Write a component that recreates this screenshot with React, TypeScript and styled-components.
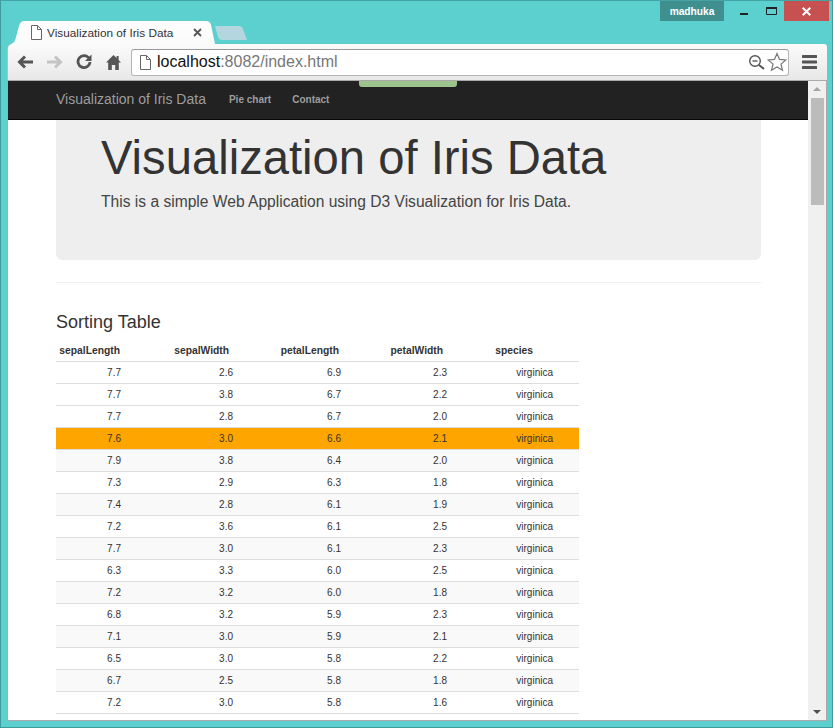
import React from "react";
import styled, { createGlobalStyle } from "styled-components";

const Global = createGlobalStyle`
  html, body { margin: 0; padding: 0; width: 833px; height: 728px; overflow: hidden; }
  * { box-sizing: border-box; }
  body { font-family: "Liberation Sans", Arial, sans-serif; color: #333; }
`;

const Frame = styled.div`
  width: 833px; height: 728px; background: #5ccfcf; border: 1px solid #3f9a9c; border-top-color: #45a3a5;
  padding: 0 5px 6px 6px; display: flex; flex-direction: column;
`;
const Strip = styled.div`
  height: 43px; flex: none; display: flex; justify-content: space-between; align-items: flex-start;
`;
const Tabs = styled.div`
  align-self: flex-end; display: flex; align-items: flex-end; height: 23px;
`;
const ActiveTab = styled.div`
  width: 208px; height: 23px; background: linear-gradient(#fff, #fafafa); display: flex; align-items: center;
  padding: 0 13px 0 23px; gap: 5px; font-size: 11.8px; color: #333;
  clip-path: path("M4 23 C7 22 8 20 9 16 L12 5 C13 2 14 0 17 0 L199 0 C202 0 203 1 204 4 L208 23 Z");
`;
const TabFile = styled.span`display: flex;`;
const TabTitle = styled.span`flex: 1; white-space: nowrap;`;
const NewTab = styled.div`
  width: 32px; height: 14px; margin: 0 0 4px 0; background: #b4d7df;
  clip-path: path("M0 0 L24 0 C26 0 27 1 28 3 L32 14 L7 14 C5 14 4 13 3 11 Z");
`;
const Controls = styled.div`display: flex; align-items: stretch; height: 20px; margin-right: -2px;`;
const User = styled.div`
  width: 64px; background: #3f8f8f; color: #fff; font-size: 10.2px; font-weight: bold; display: flex; align-items: center; justify-content: center;
  margin-right: 16px;
`;
const WinBtn = styled.div<{ $w: number; $red?: boolean; $pl?: number }>`
  width: ${p => p.$w}px; padding-left: ${p => p.$pl ?? 0}px; background: ${p => (p.$red ? "#c75050" : "transparent")}; display: flex; align-items: center;
  justify-content: ${p => (p.$pl ? "flex-start" : "center")};
`;
const Toolbar = styled.div`
  height: 37px; flex: none; background: linear-gradient(#fbfbfb, #e8e8e8); border-radius: 5px 3px 0 0; border-bottom: 1px solid #aaa;
  border-left: 1px solid #bbb; display: flex; align-items: center; padding: 0 10px 0 4px;
`;
const NavIcon = styled.div<{ $w: number }>`width: ${p => p.$w}px; display: flex; justify-content: center; align-items: center; flex: none;`;
const Omni = styled.div`
  flex: 1; height: 27px; margin: 0 13px 0 2px; background: #fff; border: 1px solid #b5b5b5; border-top-color: #999; border-radius: 3px;
  display: flex; align-items: center; padding: 0 1px 0 7px;
  font-size: 16px; color: #111;
`;
const UrlGrey = styled.span`color: #777;`;
const Url = styled.div`flex: 1; margin-left: 6px; white-space: nowrap;`;
const Star = styled.svg`margin-left: 2px;`;
const PageRow = styled.div`
  flex: 1; min-height: 0; display: flex; border-left: 1px solid #aaa; border-right: 1px solid #aaa; border-bottom: 1px solid #aaa; position: relative;
`;
const Content = styled.div`flex: 1; min-width: 0; background: #fff; overflow: hidden;`;
const Nav = styled.div`
  height: 39px; background: #222; border-bottom: 1px solid #080808; padding: 0 48px 2px; display: flex; align-items: center; gap: 23px;
`;
const Brand = styled.div`font-size: 14px; color: #9d9d9d;`;
const NavLinks = styled.div`display: flex; gap: 21px;`;
const NavLink = styled.div`font-size: 10px; color: #9d9d9d; font-weight: bold;`;
const Download = styled.div`
  position: absolute; left: 351px; top: 0; width: 98px; height: 6px; background: #9cc48c; border-radius: 0 0 3px 3px;
`;
const Main = styled.div`padding: 0 47px 0 48px;`;
const Jumbo = styled.div`
  height: 140px; background: #eee; border-radius: 0 0 6px 6px; padding: 9px 45px;
`;
const H1 = styled.h1`margin: 0; font-size: 47.2px; line-height: 58px; font-weight: 400; color: #333;`;
const Lead = styled.p`margin: 4px 0 0; font-size: 15.6px; line-height: 22px; color: #444;`;
const Rule = styled.hr`margin: 22px 0 0; border: 0; border-top: 1px solid #eee;`;
const H3 = styled.h3`margin: 29px 0 0; font-size: 18px; font-weight: 400; line-height: 20px; color: #333;`;
const Table = styled.table`
  margin-top: 9px; width: 523px; table-layout: fixed; border-collapse: collapse; font-size: 10px;
`;
const Th = styled.th<{ $pad: number }>`
  height: 20px; padding: 0 ${p => p.$pad}px 0 0; text-align: right; font-weight: bold; font-size: 10.3px; color: #333; border-bottom: 1px solid #ddd;
`;
const Td = styled.td<{ $pad: number }>`
  height: 22px; padding: 0 ${p => p.$pad}px 0 0; text-align: right; color: #333; border-bottom: 1px solid #ddd;
`;
const Row = styled.tr<{ $state: "plain" | "stripe" | "hot" }>`
  background: ${p => (p.$state === "hot" ? "#ffa500" : p.$state === "stripe" ? "#f9f9f9" : "#fff")};
`;
const Scroll = styled.div`
  width: 18px; flex: none; background: #f0f0f0; display: flex; flex-direction: column; align-items: center; padding-top: 6px;
`;
const Arrow = styled.div<{ $up?: boolean }>`
  width: 0; height: 0; border-left: 4px solid transparent; border-right: 4px solid transparent;
  ${p => (p.$up ? "border-bottom: 4px solid #a3a3a3;" : "border-top: 4px solid #505050;")}
`;
const Thumb = styled.div`width: 13px; height: 107px; background: #bcbcbc; margin: 7px 0 auto;`;
const ArrowDown = styled.div`margin-bottom: 6px;`;

const COLS = [65, 112, 108, 106, 132];
const HEAD = [["sepalLength", 1], ["sepalWidth", 4], ["petalLength", 2], ["petalWidth", 4], ["species", 46]] as const;
const PADS = [0, 0, 0, 0, 26];
const DATA = [
  ["7.7", "2.6", "6.9", "2.3"], ["7.7", "3.8", "6.7", "2.2"], ["7.7", "2.8", "6.7", "2.0"], ["7.6", "3.0", "6.6", "2.1"],
  ["7.9", "3.8", "6.4", "2.0"], ["7.3", "2.9", "6.3", "1.8"], ["7.4", "2.8", "6.1", "1.9"], ["7.2", "3.6", "6.1", "2.5"],
  ["7.7", "3.0", "6.1", "2.3"], ["6.3", "3.3", "6.0", "2.5"], ["7.2", "3.2", "6.0", "1.8"], ["6.8", "3.2", "5.9", "2.3"],
  ["7.1", "3.0", "5.9", "2.1"], ["6.5", "3.0", "5.8", "2.2"], ["6.7", "2.5", "5.8", "1.8"], ["7.2", "3.0", "5.8", "1.6"],
];

const FileIcon = () => (
  <svg width="12" height="15" viewBox="0 0 12 15">
    <path d="M1.5.5h6l4 4v10h-10z M7.5.5v4h4" fill="#fff" stroke="#666" strokeWidth="1" />
  </svg>
);

export default function App() {
  return (
    <Frame>
      <Global />
      <Strip>
        <Tabs>
          <ActiveTab>
            <TabFile><FileIcon /></TabFile>
            <TabTitle>Visualization of Iris Data</TabTitle>
            <svg width="9" height="9" viewBox="0 0 9 9"><path d="M1 1l7 7M8 1l-7 7" stroke="#555" strokeWidth="1.8" /></svg>
          </ActiveTab>
          <NewTab />
        </Tabs>
        <Controls>
          <User>madhuka</User>
          <WinBtn $w={9}><svg width="9" height="20" viewBox="0 0 9 20"><rect x="0" y="12" width="8" height="2" fill="#222" /></svg></WinBtn>
          <WinBtn $w={35} $pl={17}><svg width="11" height="8" viewBox="0 0 11 8"><path d="M.5 1.500h10v6H.5z" fill="none" stroke="#222" /><rect width="11" height="2" fill="#222" /></svg></WinBtn>
          <WinBtn $w={45} $red><svg width="9" height="9" viewBox="0 0 9 9"><path d="M.7.7l7.600 7.600M8.300.7L.7 8.300" stroke="#fff" strokeWidth="2" /></svg></WinBtn>
        </Controls>
      </Strip>
      <Toolbar>
        <NavIcon $w={26}><svg width="17" height="14" viewBox="0 0 17 14"><path d="M16 7H3M8 1.500L2.500 7 8 12.500" fill="none" stroke="#555" strokeWidth="3" /></svg></NavIcon>
        <NavIcon $w={33}><svg width="17" height="14" viewBox="0 0 17 14"><path d="M1 7h13M9 1.500L14.500 7 9 12.500" fill="none" stroke="#c4c4c4" strokeWidth="3" /></svg></NavIcon>
        <NavIcon $w={26}><svg width="16" height="16" viewBox="0 0 16 16"><path d="M13 4.200A6 6 0 1 0 14 8" fill="none" stroke="#555" strokeWidth="2.800" /><path d="M15.500 .5v6.500H9z" fill="#555" /></svg></NavIcon>
        <NavIcon $w={32}><svg width="15" height="15" viewBox="0 0 15 15"><path d="M7.500 0L0 7.500h2.200V15h3.600v-5h3.400v5h3.600V7.500H15L12.600 5V1h-2v2z" fill="#555" /></svg></NavIcon>
        <Omni>
          <FileIcon />
          <Url>localhost<UrlGrey>:8082/index.html</UrlGrey></Url>
          <svg width="17" height="17" viewBox="0 0 17 17"><circle cx="7" cy="7" r="5.300" fill="none" stroke="#555" strokeWidth="1.400" /><path d="M4.500 7h5" stroke="#555" strokeWidth="1.400" /><path d="M11 11l5 4" stroke="#555" strokeWidth="2" /></svg>
          <Star width="20" height="20" viewBox="0 0 20 20"><path d="M10 1.500l2.500 5.900 6.300.5-4.800 4.200 1.500 6.200L10 15l-5.500 3.300L6 12.100 1.200 7.900l6.300-.5z" fill="#fff" stroke="#777" strokeWidth="1.200" /></Star>
        </Omni>
        <svg width="15" height="14" viewBox="0 0 15 14"><path d="M1 0h13a1 1 0 0 1 0 3H1a1 1 0 0 1 0-3zM1 5.500h13a1 1 0 0 1 0 3H1a1 1 0 0 1 0-3zM1 11h13a1 1 0 0 1 0 3H1a1 1 0 0 1 0-3z" fill="#555" /></svg>
      </Toolbar>
      <PageRow>
        <Content>
          <Nav>
            <Brand>Visualization of Iris Data</Brand>
            <NavLinks>
              <NavLink>Pie chart</NavLink>
              <NavLink>Contact</NavLink>
            </NavLinks>
          </Nav>
          <Download />
          <Main>
            <Jumbo>
              <H1>Visualization of Iris Data</H1>
              <Lead>This is a simple Web Application using D3 Visualization for Iris Data.</Lead>
            </Jumbo>
            <Rule />
            <H3>Sorting Table</H3>
            <Table>
              <colgroup>{COLS.map((w, i) => <col key={i} width={w} />)}</colgroup>
              <thead>
                <tr>{HEAD.map(([h, pad]) => <Th key={h} $pad={pad}>{h}</Th>)}</tr>
              </thead>
              <tbody>
                {DATA.map((r, i) => (
                  <Row key={i} $state={i === 3 ? "hot" : i % 2 === 0 && i > 2 ? "stripe" : "plain"}>
                    {[...r, "virginica"].map((c, j) => <Td key={j} $pad={PADS[j]}>{c}</Td>)}
                  </Row>
                ))}
              </tbody>
            </Table>
          </Main>
        </Content>
        <Scroll>
          <Arrow $up />
          <Thumb />
          <ArrowDown><Arrow /></ArrowDown>
        </Scroll>
      </PageRow>
    </Frame>
  );
}
